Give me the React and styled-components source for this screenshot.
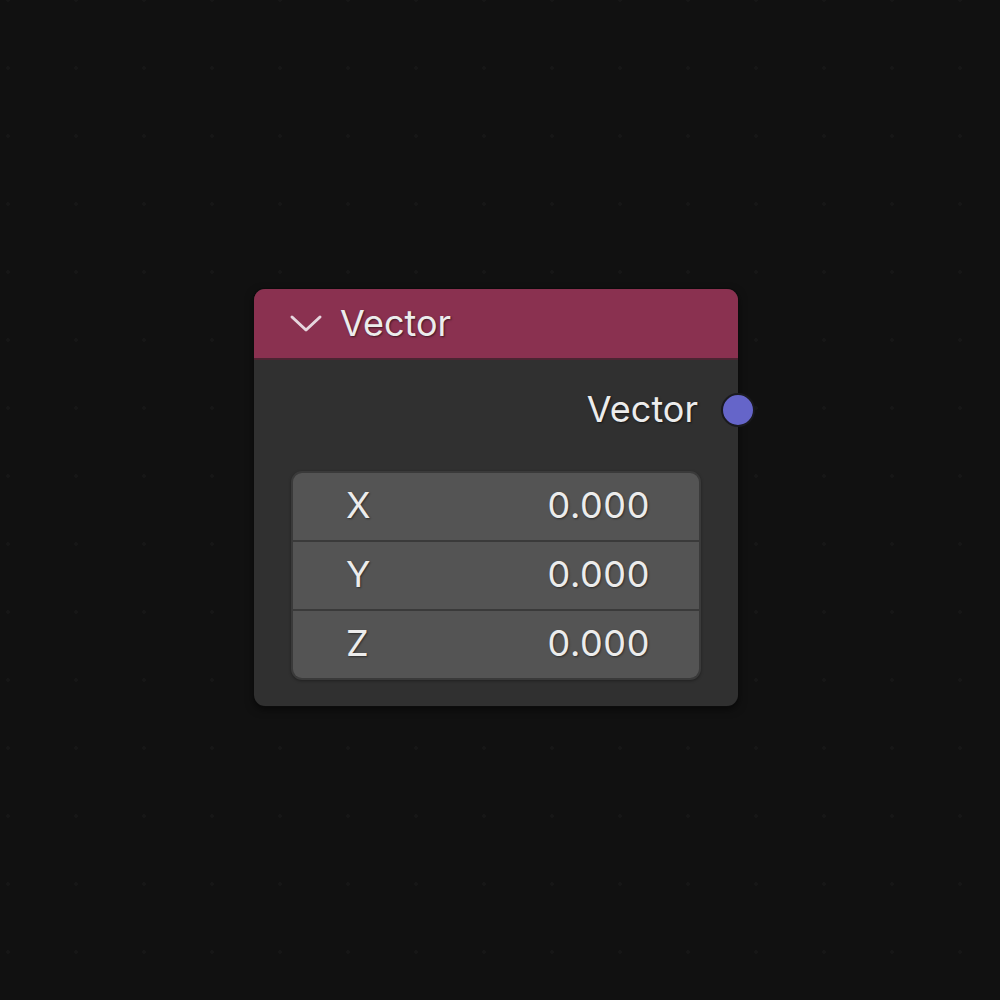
import React from 'react'
import styled, { createGlobalStyle } from 'styled-components'

const GlobalStyle = createGlobalStyle`
  html, body {
    margin: 0;
    padding: 0;
    background: #111111;
  }
  body {
    font-family: Inter, "Noto Sans", "DejaVu Sans", sans-serif;
  }
`

const Canvas = styled.div`
  position: relative;
  width: 1000px;
  height: 1000px;
  overflow: hidden;
  background-color: #111111;
  background-image: radial-gradient(circle, #171717 1.5px, transparent 2px);
  background-size: 68px 68px;
  background-position: -26px 34px;
`

const Node = styled.div`
  position: absolute;
  left: ${p => p.x}px;
  top: ${p => p.y}px;
  width: 484px;
  border-radius: 11px;
  background: #303030;
  box-shadow: 0 0 0 1px #0c0c0c, 0 3px 8px rgba(0, 0, 0, 0.6);
  display: flex;
  flex-direction: column;
`

const Header = styled.div`
  height: 69px;
  display: flex;
  align-items: center;
  gap: 17px;
  padding-left: 35px;
  background: #8a3150;
  border-radius: 11px 11px 0 0;
  border-bottom: 2px solid #4a2532;
`

const Title = styled.span`
  color: #ececec;
  font-size: 36px;
  text-shadow: 1px 1px 2px rgba(0, 0, 0, 0.55);
  margin-top: -1px;
`

const Body = styled.div`
  position: relative;
  padding: 27px 37px 26px 37px;
  display: flex;
  flex-direction: column;
`

const OutputRow = styled.div`
  height: 44px;
  display: flex;
  align-items: center;
  justify-content: flex-end;
  padding-right: 3px;
  margin-bottom: 40px;
`

const OutputLabel = styled.span`
  color: #ececec;
  font-size: 36px;
  text-shadow: 1px 1px 2px rgba(0, 0, 0, 0.55);
`

const Socket = styled.div`
  position: absolute;
  right: -17px;
  top: 33px;
  width: 30px;
  height: 30px;
  border-radius: 50%;
  background: #6565c9;
  border: 2px solid #1a1a1f;
`

const Fields = styled.div`
  display: flex;
  flex-direction: column;
  gap: 2px;
  background: #3a3a3a;
  border: 2px solid #3a3a3a;
  border-radius: 11px;
  overflow: hidden;
  box-shadow: 0 1px 3px rgba(0, 0, 0, 0.35);
`

const FieldRow = styled.div`
  box-sizing: border-box;
  height: 67px;
  display: flex;
  align-items: center;
  justify-content: space-between;
  padding: 0 49px 4px 53px;
  background: #545454;
  color: #ececec;
  font-size: 36px;
  text-shadow: 1px 1px 2px rgba(0, 0, 0, 0.45);
`

const Value = styled.span`
  letter-spacing: 0.6px;
`

const Chevron = () => (
  <svg width="34" height="20" viewBox="0 0 34 20">
    <path
      d="M3 3 L17 16 L31 3"
      fill="none"
      stroke="#e6d6de"
      strokeWidth="3"
      strokeLinecap="round"
      strokeLinejoin="round"
    />
  </svg>
)

const axes = ['X', 'Y', 'Z']

export default function App() {
  return (
    <>
      <GlobalStyle />
      <Canvas>
        <Node x={254} y={289}>
          <Header>
            <Chevron />
            <Title>Vector</Title>
          </Header>
          <Body>
            <OutputRow>
              <OutputLabel>Vector</OutputLabel>
            </OutputRow>
            <Socket />
            <Fields>
              {axes.map(a => (
                <FieldRow key={a}>
                  <span>{a}</span>
                  <Value>0.000</Value>
                </FieldRow>
              ))}
            </Fields>
          </Body>
        </Node>
      </Canvas>
    </>
  )
}
